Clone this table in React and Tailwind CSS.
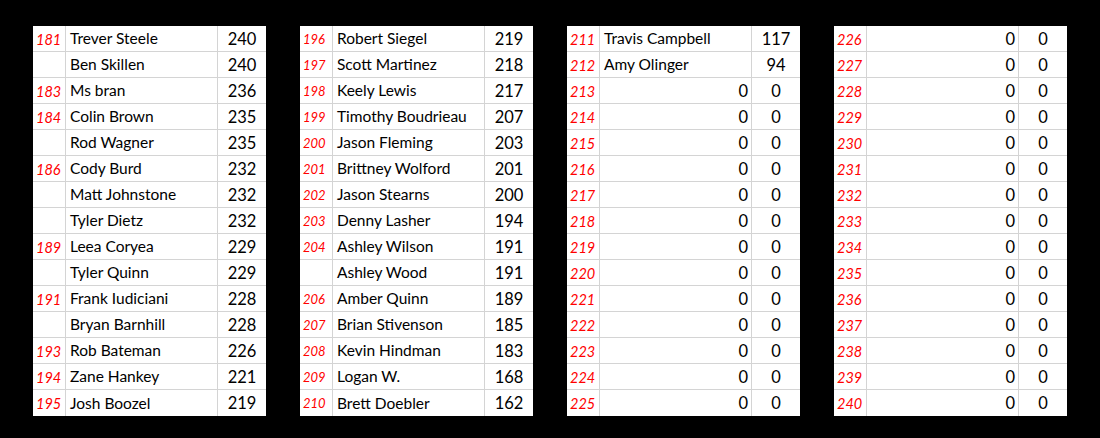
import React from "react";

const p1 = [
  ["181", "Trever Steele", "240"],
  ["", "Ben Skillen", "240"],
  ["183", "Ms bran", "236"],
  ["184", "Colin Brown", "235"],
  ["", "Rod Wagner", "235"],
  ["186", "Cody Burd", "232"],
  ["", "Matt Johnstone", "232"],
  ["", "Tyler Dietz", "232"],
  ["189", "Leea Coryea", "229"],
  ["", "Tyler Quinn", "229"],
  ["191", "Frank Iudiciani", "228"],
  ["", "Bryan Barnhill", "228"],
  ["193", "Rob Bateman", "226"],
  ["194", "Zane Hankey", "221"],
  ["195", "Josh Boozel", "219"],
];
const p2 = [
  ["196", "Robert Siegel", "219"],
  ["197", "Scott Martinez", "218"],
  ["198", "Keely Lewis", "217"],
  ["199", "Timothy Boudrieau", "207"],
  ["200", "Jason Fleming", "203"],
  ["201", "Brittney Wolford", "201"],
  ["202", "Jason Stearns", "200"],
  ["203", "Denny Lasher", "194"],
  ["204", "Ashley Wilson", "191"],
  ["", "Ashley Wood", "191"],
  ["206", "Amber Quinn", "189"],
  ["207", "Brian Stivenson", "185"],
  ["208", "Kevin Hindman", "183"],
  ["209", "Logan W.", "168"],
  ["210", "Brett Doebler", "162"],
];
const p3 = [
  ["211", "Travis Campbell", "117"],
  ["212", "Amy Olinger", "94"],
];
for (let i = 213; i <= 225; i++) p3.push([String(i), 0, "0"]);
const p4 = [];
for (let i = 226; i <= 240; i++) p4.push([String(i), 0, "0"]);

function Panel({ rows, small }) {
  return (
    <div className="w-[233px] bg-white flex flex-col">
      {rows.map((r, i) => (
        <div
          key={i}
          className={
            "flex h-[26px] " +
            (i < rows.length - 1 ? "border-b border-[#d4d4d4]" : "")
          }
        >
          <div
            className={
              "w-[33px] border-r border-[#d4d4d4] italic text-[#ff0000] flex items-center pl-[3px] pt-[2px] " +
              (small ? "text-[13px]" : "text-[14.5px]")
            }
          >
            {r[0]}
          </div>
          <div
            className={
              "w-[152px] border-r border-[#d4d4d4] flex items-center pt-[1px] " +
              (typeof r[1] === "number" ? "justify-end pr-[3px] text-[16.5px]" : "pl-[4px] text-[15.5px]")
            }
          >
            {typeof r[1] === "number" ? "0" : r[1]}
          </div>
          <div className="flex-1 flex items-center justify-center pt-[1px] text-[16.5px]">
            {r[2]}
          </div>
        </div>
      ))}
    </div>
  );
}

export default function App() {
  return (
    <div
      className="w-[1100px] h-[438px] bg-black flex items-start gap-[34px] pl-[33px] pt-[26px] text-black"
      style={{ fontFamily: "Lato, 'Open Sans', sans-serif" }}
    >
      <Panel rows={p1} />
      <Panel rows={p2} small />
      <Panel rows={p3} />
      <Panel rows={p4} />
    </div>
  );
}
